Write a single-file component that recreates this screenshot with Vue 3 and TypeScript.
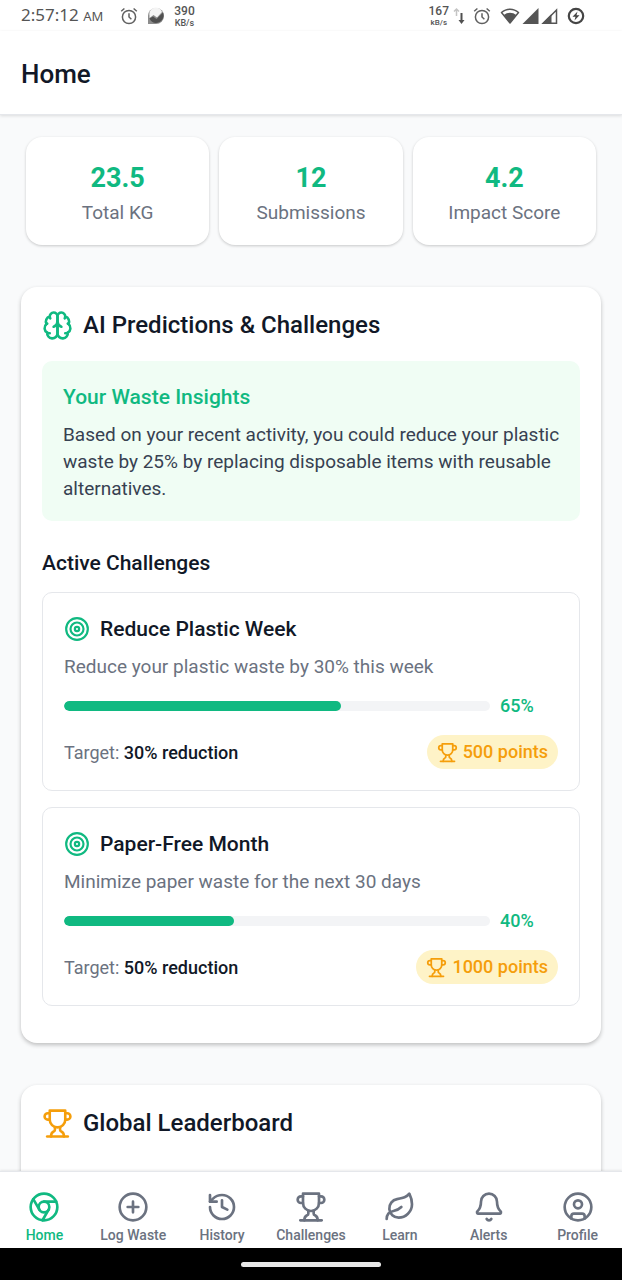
<script setup lang="ts">
import { computed, ref } from 'vue'

interface Stat {
  value: string
  label: string
}

interface Challenge {
  title: string
  description: string
  progress: number
  target: string
  points: number
}

interface Tab {
  id: string
  label: string
}

const stats: Stat[] = [
  { value: '23.5', label: 'Total KG' },
  { value: '12', label: 'Submissions' },
  { value: '4.2', label: 'Impact Score' },
]

const challenges: Challenge[] = [
  {
    title: 'Reduce Plastic Week',
    description: 'Reduce your plastic waste by 30% this week',
    progress: 65,
    target: '30% reduction',
    points: 500,
  },
  {
    title: 'Paper-Free Month',
    description: 'Minimize paper waste for the next 30 days',
    progress: 40,
    target: '50% reduction',
    points: 1000,
  },
]

const tabs: Tab[] = [
  { id: 'home', label: 'Home' },
  { id: 'log-waste', label: 'Log Waste' },
  { id: 'history', label: 'History' },
  { id: 'challenges', label: 'Challenges' },
  { id: 'learn', label: 'Learn' },
  { id: 'alerts', label: 'Alerts' },
  { id: 'profile', label: 'Profile' },
]

const activeId = ref('home')
const pageTitle = computed(() => tabs.find((t) => t.id === activeId.value)?.label ?? '')
</script>

<template>
  <div class="screen">
    <svg class="defs" aria-hidden="true">
      <symbol id="i-trophy" viewBox="0 0 24 24">
        <path d="M6 9H4.5a2.5 2.5 0 0 1 0-5H6" />
        <path d="M18 9h1.5a2.5 2.5 0 0 0 0-5H18" />
        <path d="M4 22h16" />
        <path d="M10 14.66V17c0 .55-.47.98-.97 1.21C7.85 18.75 7 20.24 7 22" />
        <path d="M14 14.66V17c0 .55.47.98.97 1.21C16.15 18.75 17 20.24 17 22" />
        <path d="M18 2H6v7a6 6 0 0 0 12 0V2Z" />
      </symbol>
      <symbol id="i-target" viewBox="0 0 24 24">
        <circle cx="12" cy="12" r="10" />
        <circle cx="12" cy="12" r="6" />
        <circle cx="12" cy="12" r="2" />
      </symbol>
      <symbol id="i-alarm" viewBox="0 0 18 18">
        <circle cx="9" cy="10" r="6.6" />
        <path d="M9 6.2V10l2.4 2.2M1.2 4.2 4.4 1.5M16.8 4.2l-3.2-2.7" />
      </symbol>
    </svg>

    <div class="status">
      <div class="status-group">
        <span class="clock">2:57:12 <small>AM</small></span>
        <svg class="status-icon alarm" aria-hidden="true"><use href="#i-alarm" /></svg>
        <svg class="status-icon" viewBox="0 0 18 18" aria-hidden="true">
          <path d="M1 17V9a8 8 0 1 1 8 8Z" fill="#8c8c8c" />
          <path d="M2.500 8.500A6.500 6.500 0 0 1 15 5L10 10.500 6.500 8 2.500 11Z" fill="#f4f4f4" />
          <path d="m2.500 11.500 3.500-2 3.500 2.500L16 5.500a7.600 7.600 0 0 1-7 10.500c-3 0-5.500-2-6.500-4.500Z" fill="#505050" />
        </svg>
        <span class="rate rate-left"><b>390</b><i>KB/s</i></span>
      </div>
      <div class="status-group">
        <span class="rate"><b>167</b><i>kB/s</i></span>
        <svg class="arrows" viewBox="0 0 12 18" aria-hidden="true">
          <path d="M3.500 9V2M1 4.500 3.500 2 6 4.500" stroke="#c4c4c4" stroke-width="1.500" fill="none" />
          <path d="M8.500 6v8" stroke="#505050" stroke-width="2" />
          <path d="M5.500 13h6l-3 4Z" fill="#505050" />
        </svg>
        <svg class="status-icon alarm" aria-hidden="true"><use href="#i-alarm" /></svg>
        <svg class="wifi" viewBox="0 0 20 18" aria-hidden="true">
          <path d="M1.500 5.500a12.500 12.500 0 0 1 17 0L10 16Z" fill="none" stroke="#555" stroke-width="1.500" stroke-linejoin="round" />
          <path d="M3.800 8a9.500 9.500 0 0 1 12.400 0L10 16Z" fill="#555" />
        </svg>
        <svg class="signal" viewBox="0 0 17 18" aria-hidden="true">
          <path d="M16.500 1v16H.5Z" fill="#555" />
        </svg>
        <svg class="signal" viewBox="0 0 17 18" aria-hidden="true">
          <path d="M15.500 3v13.200H2.300Z" fill="none" stroke="#555" stroke-width="1.500" />
          <path d="M10.500 7v10H.5Z" fill="#555" />
        </svg>
        <svg class="status-icon battery" viewBox="0 0 18 18" aria-hidden="true">
          <circle cx="9" cy="9" r="7.200" fill="none" stroke="#454545" stroke-width="2.200" />
          <path d="M10.500 4.500 5.500 9.800h3L7.500 13.500l5-5.300h-3Z" fill="#454545" />
        </svg>
      </div>
    </div>

    <header class="header">
      <h1>{{ pageTitle }}</h1>
    </header>

    <main class="content">
      <dl class="stats">
        <div v-for="stat in stats" :key="stat.label" class="stat">
          <dt>{{ stat.label }}</dt>
          <dd>{{ stat.value }}</dd>
        </div>
      </dl>

      <section class="panel">
        <h2 class="panel-title">
          <svg class="icon icon-lg green" viewBox="0 0 24 24" aria-hidden="true">
            <path d="M12 5a3 3 0 1 0-5.997.125 4 4 0 0 0-2.526 5.770 4 4 0 0 0 .556 6.588A4 4 0 1 0 12 18Z" />
            <path d="M12 5a3 3 0 1 1 5.997.125 4 4 0 0 1 2.526 5.770 4 4 0 0 1-.556 6.588A4 4 0 1 1 12 18Z" />
            <path d="M15 13a4.500 4.500 0 0 1-3-4 4.500 4.500 0 0 1-3 4" />
            <path d="M17.599 6.500a3 3 0 0 0 .399-1.375" />
            <path d="M6.003 5.125A3 3 0 0 0 6.401 6.500" />
            <path d="M3.477 10.896a4 4 0 0 1 .585-.396" />
            <path d="M19.938 10.500a4 4 0 0 1 .585.396" />
            <path d="M6 18a4 4 0 0 1-1.967-.516" />
            <path d="M19.967 17.484A4 4 0 0 1 18 18" />
          </svg>
          AI Predictions &amp; Challenges
        </h2>

        <div class="insight">
          <h3>Your Waste Insights</h3>
          <p>
            Based on your recent activity, you could reduce your plastic waste by 25% by replacing
            disposable items with reusable alternatives.
          </p>
        </div>

        <h3 class="subtitle">Active Challenges</h3>

        <article v-for="item in challenges" :key="item.title" class="challenge">
          <h4>
            <svg class="icon icon-md green" aria-hidden="true"><use href="#i-target" /></svg>
            {{ item.title }}
          </h4>
          <p class="description">{{ item.description }}</p>
          <div class="progress">
            <div
              class="track"
              role="progressbar"
              aria-valuemin="0"
              aria-valuemax="100"
              :aria-valuenow="item.progress"
              :aria-label="item.title"
            >
              <div class="fill" :style="{ width: item.progress + '%' }"></div>
            </div>
            <span class="percent">{{ item.progress }}%</span>
          </div>
          <div class="challenge-footer">
            <span class="target">Target: <strong>{{ item.target }}</strong></span>
            <span class="points">
              <svg class="icon icon-sm" aria-hidden="true"><use href="#i-trophy" /></svg>
              {{ item.points }} points
            </span>
          </div>
        </article>
      </section>

      <section class="panel leaderboard">
        <h2 class="panel-title">
          <svg class="icon icon-lg amber" aria-hidden="true"><use href="#i-trophy" /></svg>
          Global Leaderboard
        </h2>
      </section>
    </main>

    <nav class="tabs" aria-label="Main">
      <a
        v-for="tab in tabs"
        :key="tab.id"
        :href="'#' + tab.id"
        :class="{ active: tab.id === activeId }"
        :aria-current="tab.id === activeId ? 'page' : undefined"
        @click="activeId = tab.id"
      >
        <svg class="icon icon-tab" viewBox="0 0 24 24" aria-hidden="true">
          <template v-if="tab.id === 'home'">
            <circle cx="12" cy="12" r="10" />
            <circle cx="12" cy="12" r="4" />
            <path d="M21.170 8H12M3.950 6.060 8.540 14M10.880 21.940 15.460 14" />
          </template>
          <template v-else-if="tab.id === 'log-waste'">
            <circle cx="12" cy="12" r="10" />
            <path d="M8 12h8M12 8v8" />
          </template>
          <template v-else-if="tab.id === 'history'">
            <path d="M3 12a9 9 0 1 0 9-9 9.750 9.750 0 0 0-6.740 2.740L3 8" />
            <path d="M3 3v5h5M12 7v5l4 2" />
          </template>
          <use v-else-if="tab.id === 'challenges'" href="#i-trophy" />
          <template v-else-if="tab.id === 'learn'">
            <path d="M11 20A7 7 0 0 1 9.800 6.100C15.500 5 17 4.480 19 2c1 2 2 4.180 2 8 0 5.500-4.780 10-10 10Z" />
            <path d="M2 21c0-3 1.850-5.360 5.080-6C9.500 14.520 12 13 13 12" />
          </template>
          <template v-else-if="tab.id === 'alerts'">
            <path d="M10.268 21a2 2 0 0 0 3.464 0" />
            <path d="M3.262 15.326A1 1 0 0 0 4 17h16a1 1 0 0 0 .740-1.673C19.410 13.956 18 12.499 18 8A6 6 0 0 0 6 8c0 4.499-1.411 5.956-2.738 7.326" />
          </template>
          <template v-else>
            <circle cx="12" cy="12" r="10" />
            <circle cx="12" cy="10" r="3" />
            <path d="M7 20.662V19a2 2 0 0 1 2-2h6a2 2 0 0 1 2 2v1.662" />
          </template>
        </svg>
        <span>{{ tab.label }}</span>
      </a>
    </nav>

    <div class="gesture"><span></span></div>
  </div>
</template>

<style>
body {
  margin: 0;
}
</style>

<style scoped>
.screen {
  display: flex;
  flex-direction: column;
  height: 100vh;
  background: #f9fafb;
  color: #111827;
  font-family: Roboto, "Liberation Sans", sans-serif;
}

.defs {
  position: absolute;
  width: 0;
  height: 0;
}

h1,
h2,
h3,
h4,
p,
dl,
dd {
  margin: 0;
}

h1,
h2,
h3,
h4 {
  font-weight: 500;
}

.status {
  display: flex;
  justify-content: space-between;
  align-items: center;
  height: 31px;
  padding: 0 37px 0 21px;
  background: #fff;
  color: #555;
}

.status-group {
  display: flex;
  align-items: center;
}

.clock {
  margin-right: 17px;
  font-family: "Noto Sans", sans-serif;
  font-size: 17px;
  line-height: 24px;
}

.clock small {
  font-size: 13px;
}

.status-icon {
  width: 18px;
  height: 18px;
  margin-right: 9px;
}

.alarm {
  fill: none;
  stroke: #606060;
  stroke-width: 1.5;
}

.rate {
  display: flex;
  flex-direction: column;
  align-items: center;
}

.rate b {
  font-size: 12px;
  font-weight: 500;
  line-height: 14px;
}

.rate i {
  font-size: 8px;
  font-style: normal;
  font-weight: 500;
  line-height: 10px;
}

.rate-left i {
  font-size: 9px;
}

.arrows {
  width: 12px;
  height: 18px;
  margin: 0 8px 0 4px;
}

.wifi {
  width: 20px;
  height: 18px;
}

.signal {
  width: 17px;
  height: 18px;
  margin-left: 2px;
}

.battery {
  margin: 0 0 0 9px;
}

.header {
  position: relative;
  z-index: 1;
  padding: 25px 21px 22px;
  border-bottom: 1px solid #e5e7eb;
  background: #fff;
  box-shadow: 0 1px 3px rgba(0, 0, 0, 0.12);
}

.header h1 {
  font-size: 26px;
  line-height: 36px;
}

.content {
  display: flex;
  flex: 1;
  flex-direction: column;
  gap: 42px;
  min-height: 0;
  padding: 22px 21px;
  overflow-y: auto;
  scrollbar-width: none;
}

.stats {
  display: grid;
  flex-shrink: 0;
  grid-template-columns: repeat(3, 1fr);
  gap: 10px;
  padding: 0 5px;
}

.stat {
  display: flex;
  flex-direction: column-reverse;
  gap: 4px;
  padding: 22px 8px 20px;
  border-radius: 16px;
  background: #fff;
  box-shadow: 0 1px 3px rgba(0, 0, 0, 0.2);
  text-align: center;
}

.stat dt {
  color: #6b7280;
  font-size: 19px;
  line-height: 24px;
}

.stat dd {
  color: #10b981;
  font-size: 27px;
  font-weight: 700;
  line-height: 38px;
}

.panel {
  flex-shrink: 0;
  padding: 21px;
  border-radius: 16px;
  background: #fff;
  box-shadow: 0 2px 4px rgba(0, 0, 0, 0.24);
}

.leaderboard {
  min-height: 320px;
}

.panel-title {
  display: flex;
  align-items: center;
  gap: 10px;
  margin-bottom: 19px;
  font-size: 24px;
  line-height: 34px;
}

.icon {
  flex-shrink: 0;
  fill: none;
  stroke: currentColor;
  stroke-linecap: round;
  stroke-linejoin: round;
  stroke-width: 2;
}

.icon-sm {
  width: 21px;
  height: 21px;
}

.icon-md {
  width: 26px;
  height: 26px;
}

.icon-lg {
  width: 31px;
  height: 31px;
}

.icon-tab {
  width: 32px;
  height: 32px;
}

.green {
  color: #10b981;
}

.amber {
  color: #f59e0b;
}

.insight {
  margin-bottom: 26px;
  padding: 21px 12px 19px 21px;
  border-radius: 10px;
  background: #f0fdf4;
}

.insight h3 {
  margin-bottom: 9px;
  color: #10b981;
  font-size: 21px;
  line-height: 30px;
}

.insight p {
  color: #374151;
  font-size: 19px;
  line-height: 27px;
}

.subtitle {
  margin-bottom: 13px;
  font-size: 21px;
  line-height: 32px;
}

.challenge {
  margin-bottom: 16px;
  padding: 21px;
  border: 1px solid #e5e7eb;
  border-radius: 10px;
}

.challenge h4 {
  display: flex;
  align-items: center;
  gap: 10px;
  margin-bottom: 9px;
  font-size: 21px;
  line-height: 30px;
}

.description {
  margin-bottom: 11px;
  color: #6b7280;
  font-size: 19px;
  line-height: 28px;
}

.progress {
  display: flex;
  align-items: center;
  gap: 10px;
  margin-bottom: 15px;
}

.track {
  flex: 1;
  height: 10px;
  border-radius: 5px;
  background: #f3f4f6;
  overflow: hidden;
}

.fill {
  height: 100%;
  border-radius: 5px;
  background: #10b981;
}

.percent {
  width: 58px;
  color: #10b981;
  font-size: 18px;
  font-weight: 500;
  line-height: 28px;
}

.challenge-footer {
  display: flex;
  align-items: center;
  justify-content: space-between;
  font-size: 18px;
}

.target {
  color: #6b7280;
}

.target strong {
  color: #111827;
  font-weight: 500;
}

.points {
  display: flex;
  align-items: center;
  gap: 5px;
  padding: 4px 10px;
  border-radius: 17px;
  background: #fef3c7;
  color: #f59e0b;
  font-weight: 500;
  line-height: 26px;
}

.tabs {
  display: flex;
  position: relative;
  z-index: 1;
  padding: 19px 0 4px;
  border-top: 1px solid #e5e7eb;
  background: #fff;
  box-shadow: 0 -1px 2px rgba(0, 0, 0, 0.08);
}

.tabs a {
  display: flex;
  flex: 1;
  flex-direction: column;
  align-items: center;
  gap: 3px;
  min-width: 0;
  color: #6b7280;
  font-size: 14px;
  font-weight: 500;
  line-height: 18px;
  text-decoration: none;
  white-space: nowrap;
}

.tabs a.active {
  color: #10b981;
}

.gesture {
  display: flex;
  align-items: center;
  justify-content: center;
  height: 32px;
  background: #000;
}

.gesture span {
  width: 140px;
  height: 5px;
  border-radius: 3px;
  background: #e8e8e8;
}
</style>
